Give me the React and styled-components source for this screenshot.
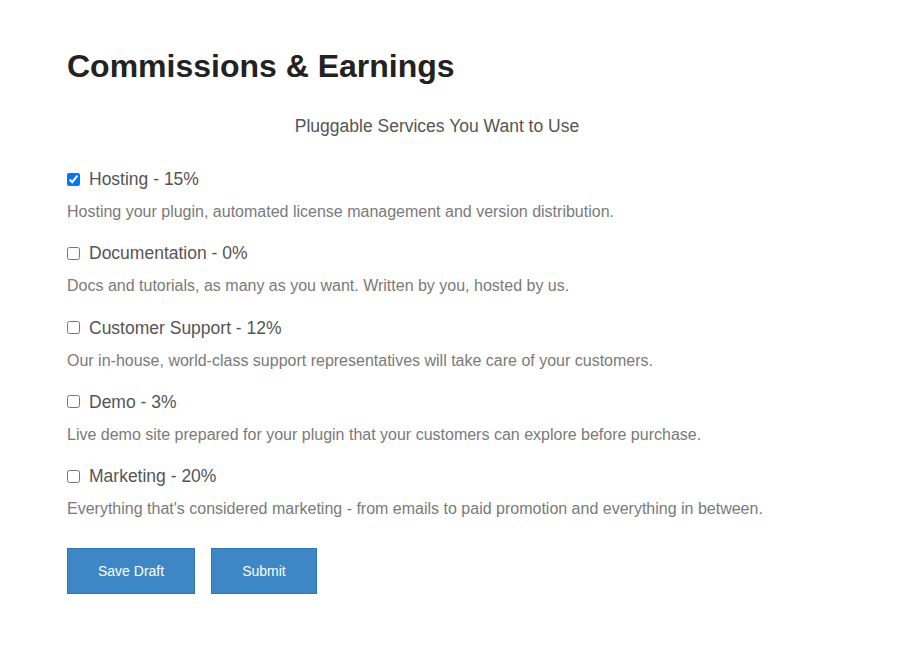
import React, { useState } from "react";
import styled, { createGlobalStyle } from "styled-components";

const Global = createGlobalStyle`
  html, body { margin: 0; padding: 0; background: #fff; }
  body { font-family: "Liberation Sans", Arial, sans-serif; }
`;

const Page = styled.div`
  padding: 46px 0 0 67px;
  width: 740px;
`;

const Title = styled.h1`
  margin: 0;
  font-size: 32px;
  font-weight: bold;
  color: #222;
  line-height: 40px;
`;

const Subtitle = styled.div`
  margin-top: 30px;
  text-align: center;
  font-size: 17.5px;
  color: #555;
  line-height: 20px;
`;

const List = styled.div`
  margin-top: 33px;
  display: flex;
  flex-direction: column;
`;

const Item = styled.div`
  height: 74.3px;
`;

const Label = styled.label`
  display: flex;
  align-items: center;
  font-size: 17.5px;
  color: #555;
  line-height: 20px;
  height: 20px;
`;

const Check = styled.input`
  margin: 0 9px 0 0;
  width: 13px;
  height: 13px;
`;

const Desc = styled.div`
  margin-top: 13px;
  font-size: 16px;
  color: #7a7a7a;
  line-height: 20px;
`;

const Buttons = styled.div`
  margin-top: 8px;
  display: flex;
  gap: 16px;
`;

const Button = styled.button`
  height: 46px;
  padding: 0 ${(p) => p.$pad}px;
  background: #3d87c7;
  border: 1px solid #2f78b8;
  color: #fff;
  font-family: "Liberation Sans", Arial, sans-serif;
  font-size: 14px;
  cursor: pointer;
`;

const services = [
  { name: "Hosting - 15%", desc: "Hosting your plugin, automated license management and version distribution.", checked: true },
  { name: "Documentation - 0%", desc: "Docs and tutorials, as many as you want. Written by you, hosted by us." },
  { name: "Customer Support - 12%", desc: "Our in-house, world-class support representatives will take care of your customers." },
  { name: "Demo - 3%", desc: "Live demo site prepared for your plugin that your customers can explore before purchase." },
  { name: "Marketing - 20%", desc: "Everything that's considered marketing - from emails to paid promotion and everything in between." },
];

export default function App() {
  const [checked, setChecked] = useState(services.map((s) => !!s.checked));
  return (
    <>
      <Global />
      <Page>
        <Title>Commissions &amp; Earnings</Title>
        <Subtitle>Pluggable Services You Want to Use</Subtitle>
        <List>
          {services.map((s, i) => (
            <Item key={s.name}>
              <Label>
                <Check
                  type="checkbox"
                  checked={checked[i]}
                  onChange={() => setChecked((c) => c.map((v, j) => (j === i ? !v : v)))}
                />
                {s.name}
              </Label>
              <Desc>{s.desc}</Desc>
            </Item>
          ))}
        </List>
        <Buttons>
          <Button $pad={30}>Save Draft</Button>
          <Button $pad={30}>Submit</Button>
        </Buttons>
      </Page>
    </>
  );
}
